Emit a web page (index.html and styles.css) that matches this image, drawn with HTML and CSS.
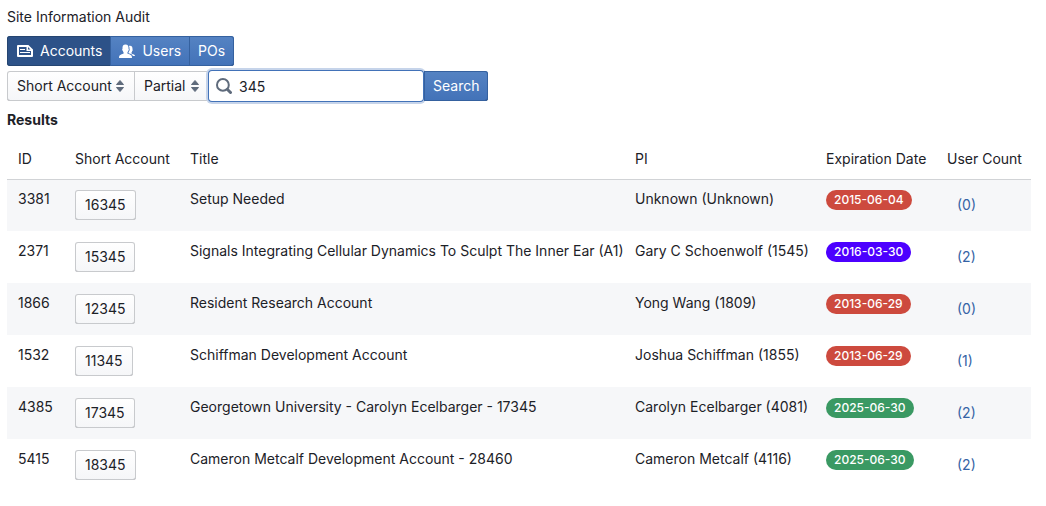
FILE: index.html
```
<!DOCTYPE html>
<html lang="en">
<head>
<meta charset="utf-8">
<meta name="viewport" content="width=device-width, initial-scale=1">
<title>Site Information Audit</title>
<link rel="stylesheet" href="styles.css">
</head>
<body>
<main class="page">
  <div class="page-title">Site Information Audit</div>

  <nav class="button-group tabs" aria-label="Views">
    <button type="button" class="button primary active" aria-pressed="true">
      <svg class="icon" viewBox="0 0 16 16" aria-hidden="true"><path fill="currentColor" fill-rule="evenodd" d="M1 2h10.400L16 6.500V13a1 1 0 0 1-1 1H1a1 1 0 0 1-1-1V3a1 1 0 0 1 1-1zm1 2v8h12V8H9.500V4zM3 6h5v1H3zm0 3h10v1H3zM11 4v2.500h2.500z"/></svg>
      Accounts
    </button>
    <button type="button" class="button primary">
      <svg class="icon" viewBox="0 0 16 16" aria-hidden="true"><path fill="currentColor" d="M10.900 11.600c-.5-.25-2-.7-2.500-1V9.400c.3-.4.600-.9.700-1.500.3-.1.600-.5.700-1.100.1-.5 0-.9-.3-1.100.2-2.700-.7-4.200-3-4.200S3.300 3 3.500 5.700c-.3.200-.4.600-.3 1.100.1.600.4 1 .7 1.100.1.600.4 1.100.7 1.500v1.200c-.5.300-2 .75-2.500 1C.9 12.200 0 12.700 0 15h13c0-2.300-.9-2.800-2.100-3.400zM14.200 11.200c-.5-.2-1.400-.4-1.700-.7V9.400c.3-.3.500-.7.600-1.200.3-.1.500-.5.600-.9.100-.4 0-.7-.2-.9.200-2.200-.6-3.700-2.500-3.700-.4 0-.8.100-1.100.2.600 1 .7 2 .6 2.800.4.700.2 1.800-.5 2.700-.1.300-.3.700-.5 1v.5c.4.300 1.600.6 2.100.9 1.200.5 1.900 1 2.200 2.200H16c0-.9-.6-1.300-1.800-1.800z"/></svg>
      Users
    </button>
    <button type="button" class="button primary">POs</button>
  </nav>

  <form class="search-bar" onsubmit="return false">
    <div class="select-box field">
      <select class="select" aria-label="Search field"><option>Short Account</option></select>
      <svg class="select-caret" viewBox="0 0 16 16" aria-hidden="true"><path fill="currentColor" d="M8 2.500 11.500 6.500h-7zM4.500 9.500h7L8 13.500z" stroke="currentColor" stroke-width="1" stroke-linejoin="round"/></svg>
    </div>
    <div class="select-box match">
      <select class="select" aria-label="Match type"><option>Partial</option></select>
      <svg class="select-caret" viewBox="0 0 16 16" aria-hidden="true"><path fill="currentColor" d="M8 2.500 11.500 6.500h-7zM4.500 9.500h7L8 13.500z" stroke="currentColor" stroke-width="1" stroke-linejoin="round"/></svg>
    </div>
    <div class="search-box">
      <svg class="search-icon" viewBox="0 0 16 16" aria-hidden="true"><g fill="none" stroke="currentColor"><circle cx="6.900" cy="6.900" r="5.900" stroke-width="2"/><path d="m11.500 11.500 3 3" stroke-width="3" stroke-linecap="round"/></g></svg>
      <input class="search-input" type="text" value="345" aria-label="Search term">
    </div>
    <button type="submit" class="button primary search-button">Search</button>
  </form>

  <strong class="results-title">Results</strong>

  <table class="results">
    <colgroup>
      <col class="col-id"><col class="col-account"><col><col class="col-pi"><col class="col-date"><col class="col-count">
    </colgroup>
    <thead>
      <tr><th>ID</th><th>Short Account</th><th>Title</th><th>PI</th><th>Expiration Date</th><th>User Count</th></tr>
    </thead>
    <tbody>
      <tr><td>3381</td><td><button type="button" class="button">16345</button></td><td>Setup Needed</td><td>Unknown (Unknown)</td><td><span class="tag danger">2015-06-04</span></td><td><a class="count" href="#">(0)</a></td></tr>
      <tr><td>2371</td><td><button type="button" class="button">15345</button></td><td>Signals Integrating Cellular Dynamics To Sculpt The Inner Ear (A1)</td><td>Gary C Schoenwolf (1545)</td><td><span class="tag violet">2016-03-30</span></td><td><a class="count" href="#">(2)</a></td></tr>
      <tr><td>1866</td><td><button type="button" class="button">12345</button></td><td>Resident Research Account</td><td>Yong Wang (1809)</td><td><span class="tag danger">2013-06-29</span></td><td><a class="count" href="#">(0)</a></td></tr>
      <tr><td>1532</td><td><button type="button" class="button">11345</button></td><td>Schiffman Development Account</td><td>Joshua Schiffman (1855)</td><td><span class="tag danger">2013-06-29</span></td><td><a class="count" href="#">(1)</a></td></tr>
      <tr><td>4385</td><td><button type="button" class="button">17345</button></td><td>Georgetown University - Carolyn Ecelbarger - 17345</td><td>Carolyn Ecelbarger (4081)</td><td><span class="tag success">2025-06-30</span></td><td><a class="count" href="#">(2)</a></td></tr>
      <tr><td>5415</td><td><button type="button" class="button">18345</button></td><td>Cameron Metcalf Development Account - 28460</td><td>Cameron Metcalf (4116)</td><td><span class="tag success">2025-06-30</span></td><td><a class="count" href="#">(2)</a></td></tr>
    </tbody>
  </table>
</main>
</body>
</html>
```
FILE: styles.css
```
*, *::before, *::after {
  box-sizing: border-box;
}

body {
  margin: 0;
  background: #fff;
  color: #1c2127;
  font: 14px/18px Inter, "Liberation Sans", sans-serif;
}

.page {
  display: flex;
  flex-direction: column;
  align-items: flex-start;
  gap: 10px;
  padding: 8px 15px 8px 7px;
}

.button-group {
  display: flex;
}

.button {
  display: inline-flex;
  align-items: center;
  justify-content: center;
  gap: 7px;
  height: 30px;
  padding: 0 10px;
  border: 0;
  border-radius: 3px;
  background: linear-gradient(#fff, #f5f6f8);
  box-shadow: inset 0 0 0 1px #c8cacd, inset 0 -1px 0 #afb2b6;
  color: inherit;
  font: inherit;
}

.button.primary {
  padding: 0 9px;
  background: linear-gradient(#5583c3, #4272b8);
  box-shadow: inset 0 0 0 1px #35619f, inset 0 -1px 0 #29496f;
  color: #fff;
}

.button.primary.active {
  background: #2d5288;
  box-shadow: inset 0 0 0 1px #254571;
}

.tabs .button:not(:last-child) {
  margin-right: -1px;
  border-top-right-radius: 0;
  border-bottom-right-radius: 0;
}

.tabs .button:not(:first-child) {
  border-top-left-radius: 0;
  border-bottom-left-radius: 0;
}

.tabs .button:first-child {
  padding-left: 10px;
}

.icon {
  width: 16px;
  height: 16px;
}

.search-bar {
  display: flex;
  margin-top: -5px;
}

.select-box {
  position: relative;
  margin-right: -1px;
}

.select-box.field {
  width: 128px;
}

.select-box.match {
  width: 76px;
}

.select {
  appearance: none;
  width: 100%;
  height: 30px;
  padding: 0 20px 0 10px;
  border: 0;
  border-radius: 0;
  background: linear-gradient(#fff, #f5f6f8);
  box-shadow: inset 0 0 0 1px #c8cacd, inset 0 -1px 0 #afb2b6;
  color: inherit;
  font: inherit;
}

.field .select {
  border-radius: 3px 0 0 3px;
}

.select-caret {
  position: absolute;
  top: 7px;
  right: 7px;
  width: 16px;
  height: 16px;
  color: #5f6b7c;
  pointer-events: none;
}

.search-box {
  position: relative;
  z-index: 1;
  width: 214px;
}

.search-input {
  width: 100%;
  height: 30px;
  padding: 0 10px 0 30px;
  border: 0;
  border-radius: 3px;
  outline: 0;
  background: #fff;
  box-shadow: 0 0 0 1px #4272b8, 0 0 0 3px #c6d4ea;
  color: inherit;
  font: inherit;
}

.search-icon {
  position: absolute;
  top: 7px;
  left: 7px;
  width: 16px;
  height: 16px;
  color: #5f6b7c;
}

.button.search-button {
  position: relative;
  z-index: 2;
  margin-left: 1px;
  border-radius: 0 3px 3px 0;
}

.results {
  width: 100%;
  table-layout: fixed;
  border-collapse: separate;
  border-spacing: 0;
  white-space: nowrap;
}

.col-id {
  width: 57px;
}

.col-account {
  width: 115px;
}

.col-pi {
  width: 191px;
}

.col-date {
  width: 121px;
}

.col-count {
  width: 95px;
}

.results th,
.results td {
  padding: 11px 0 11px 11px;
  font-weight: 400;
  text-align: left;
  vertical-align: top;
}

.results tbody tr:nth-child(odd) {
  background: #f6f7f9;
}

.results tbody tr:first-child td {
  box-shadow: inset 0 1px 0 #d1d3d6;
}

.results .button {
  vertical-align: top;
}

.tag {
  display: inline-block;
  padding: 2px 8px;
  border-radius: 10px;
  color: #fff;
  font-size: 12px;
  font-weight: 500;
  line-height: 16px;
  vertical-align: top;
}

.danger {
  background: #cd4a3e;
}

.violet {
  background: #4c00ff;
}

.success {
  background: #3a9963;
}

.count {
  display: inline-flex;
  align-items: center;
  height: 30px;
  padding: 0 10px;
  color: #3563a5;
  text-decoration: none;
  vertical-align: top;
}
```
